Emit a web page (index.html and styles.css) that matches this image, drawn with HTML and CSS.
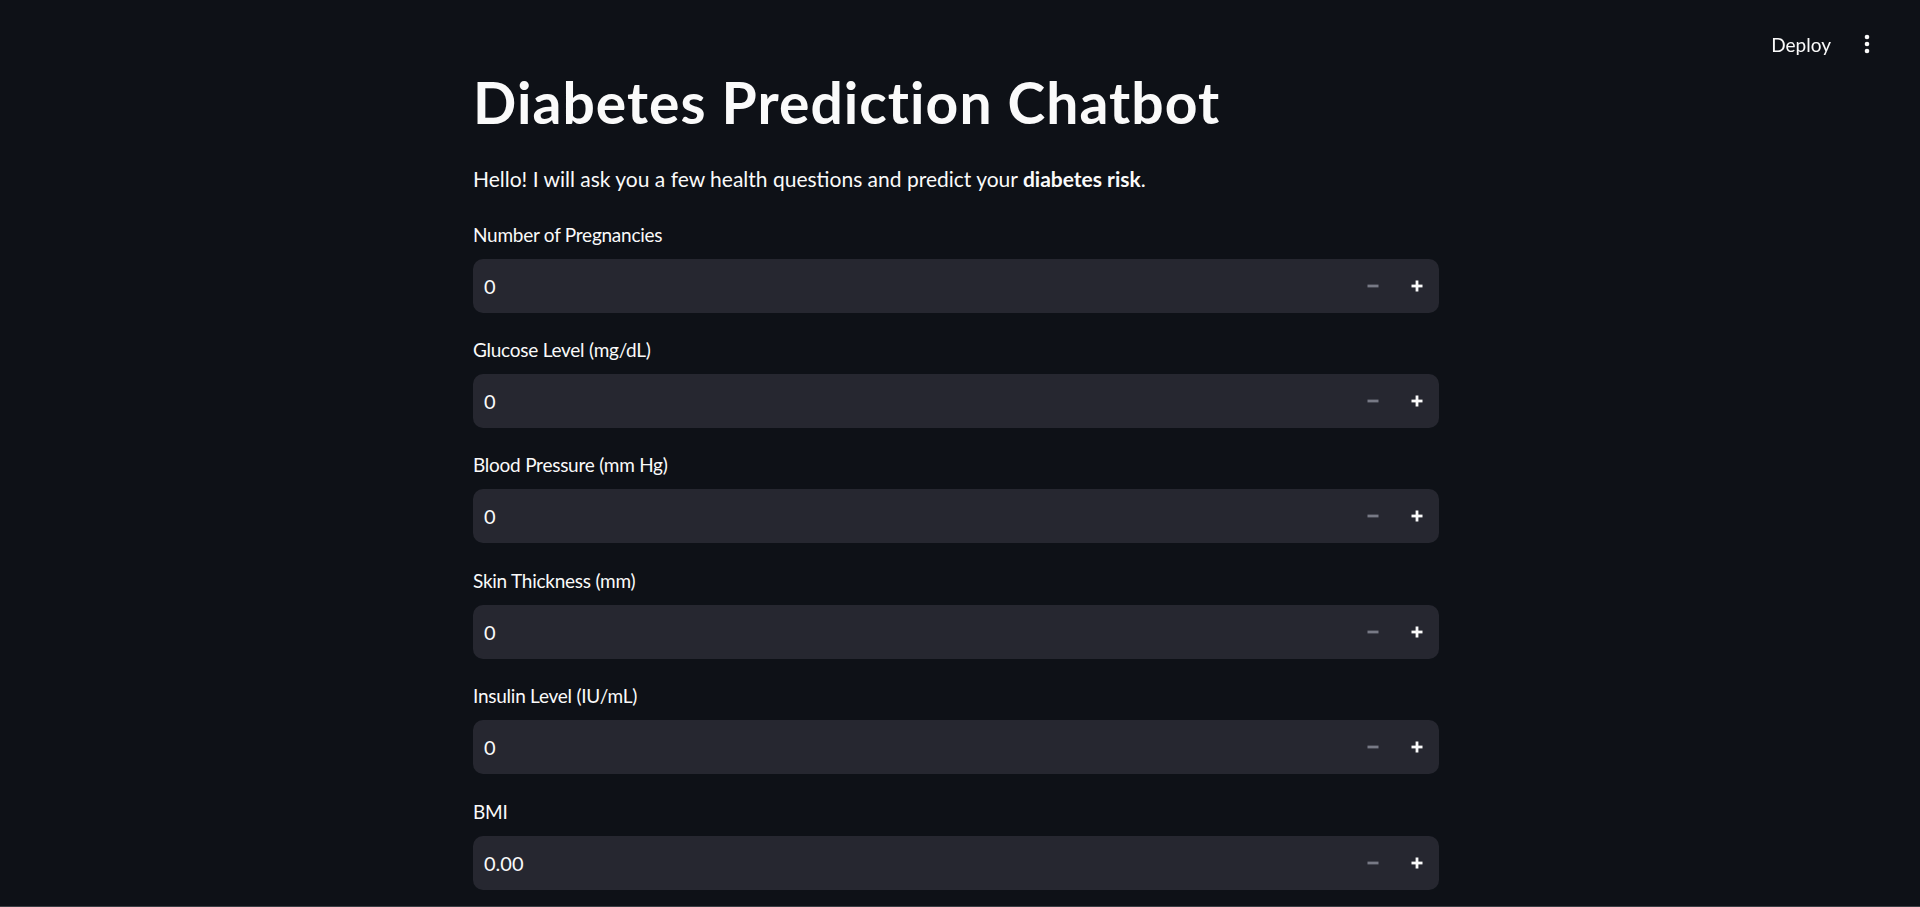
FILE: index.html
```html
<!DOCTYPE html>
<html lang="en">
<head>
<meta charset="utf-8">
<title>Diabetes Prediction Chatbot</title>
<link rel="stylesheet" href="styles.css">
</head>
<body>
<header class="top-bar">
  <span class="deploy">Deploy</span>
  <span class="kebab" aria-label="Main menu">
    <svg width="8" height="20" viewBox="0 0 8 20"><circle cx="4" cy="3" r="2.3" fill="#fafafa"/><circle cx="4" cy="10" r="2.3" fill="#fafafa"/><circle cx="4" cy="17" r="2.3" fill="#fafafa"/></svg>
  </span>
</header>
<main class="main">
  <div class="block">
    <h1 class="title">Diabetes Prediction Chatbot</h1>
    <p class="intro">Hello! I will ask you a few health questions and predict your <strong>diabetes risk</strong>.</p>

    <div class="field">
      <label class="label">Number of Pregnancies</label>
      <div class="num-input">
        <span class="value">0</span>
        <span class="step minus"><svg width="12" height="12" viewBox="0 0 12 12"><rect x="0.5" y="4.6" width="11" height="2.8" fill="currentColor"/></svg></span>
        <span class="step plus"><svg width="12" height="12" viewBox="0 0 12 12"><rect x="0.5" y="4.6" width="11" height="2.8" fill="currentColor"/><rect x="4.6" y="0.5" width="2.8" height="11" fill="currentColor"/></svg></span>
      </div>
    </div>

    <div class="field">
      <label class="label">Glucose Level (mg/dL)</label>
      <div class="num-input">
        <span class="value">0</span>
        <span class="step minus"><svg width="12" height="12" viewBox="0 0 12 12"><rect x="0.5" y="4.6" width="11" height="2.8" fill="currentColor"/></svg></span>
        <span class="step plus"><svg width="12" height="12" viewBox="0 0 12 12"><rect x="0.5" y="4.6" width="11" height="2.8" fill="currentColor"/><rect x="4.6" y="0.5" width="2.8" height="11" fill="currentColor"/></svg></span>
      </div>
    </div>

    <div class="field">
      <label class="label">Blood Pressure (mm Hg)</label>
      <div class="num-input">
        <span class="value">0</span>
        <span class="step minus"><svg width="12" height="12" viewBox="0 0 12 12"><rect x="0.5" y="4.6" width="11" height="2.8" fill="currentColor"/></svg></span>
        <span class="step plus"><svg width="12" height="12" viewBox="0 0 12 12"><rect x="0.5" y="4.6" width="11" height="2.8" fill="currentColor"/><rect x="4.6" y="0.5" width="2.8" height="11" fill="currentColor"/></svg></span>
      </div>
    </div>

    <div class="field">
      <label class="label">Skin Thickness (mm)</label>
      <div class="num-input">
        <span class="value">0</span>
        <span class="step minus"><svg width="12" height="12" viewBox="0 0 12 12"><rect x="0.5" y="4.6" width="11" height="2.8" fill="currentColor"/></svg></span>
        <span class="step plus"><svg width="12" height="12" viewBox="0 0 12 12"><rect x="0.5" y="4.6" width="11" height="2.8" fill="currentColor"/><rect x="4.6" y="0.5" width="2.8" height="11" fill="currentColor"/></svg></span>
      </div>
    </div>

    <div class="field">
      <label class="label">Insulin Level (IU/mL)</label>
      <div class="num-input">
        <span class="value">0</span>
        <span class="step minus"><svg width="12" height="12" viewBox="0 0 12 12"><rect x="0.5" y="4.6" width="11" height="2.8" fill="currentColor"/></svg></span>
        <span class="step plus"><svg width="12" height="12" viewBox="0 0 12 12"><rect x="0.5" y="4.6" width="11" height="2.8" fill="currentColor"/><rect x="4.6" y="0.5" width="2.8" height="11" fill="currentColor"/></svg></span>
      </div>
    </div>

    <div class="field">
      <label class="label">BMI</label>
      <div class="num-input">
        <span class="value">0.00</span>
        <span class="step minus"><svg width="12" height="12" viewBox="0 0 12 12"><rect x="0.5" y="4.6" width="11" height="2.8" fill="currentColor"/></svg></span>
        <span class="step plus"><svg width="12" height="12" viewBox="0 0 12 12"><rect x="0.5" y="4.6" width="11" height="2.8" fill="currentColor"/><rect x="4.6" y="0.5" width="2.8" height="11" fill="currentColor"/></svg></span>
      </div>
    </div>
  </div>
</main>
<div class="bottom-edge"></div>
</body>
</html>
```

FILE: styles.css
```css
html, body {
  margin: 0;
  padding: 0;
  background: #0e1117;
  color: #fafafa;
  font-family: Lato, "Noto Sans", sans-serif;
  overflow: hidden;
}

.top-bar {
  position: fixed;
  top: 0;
  right: 0;
  height: 88px;
  display: flex;
  align-items: center;
  padding-right: 49px;
  gap: 32px;
}

.deploy {
  font-size: 19px;
  color: #fafafa;
  line-height: 1;
}

.kebab {
  display: flex;
  align-items: center;
}

.kebab svg {
  display: block;
}

.main {
  display: flex;
  justify-content: center;
  padding-right: 8px;
  padding-top: 68px;
}

.block {
  width: 966px;
  display: flex;
  flex-direction: column;
}

.title {
  margin: 0;
  font-size: 57px;
  line-height: 1.2;
  font-weight: 700;
  letter-spacing: 1.05px;
}

.intro {
  margin: 25.2px 0 0;
  font-size: 21px;
  line-height: 1.6;
}

.intro strong {
  font-weight: 700;
}

.field {
  display: flex;
  flex-direction: column;
  margin-top: 22.4px;
}

.field + .field {
  margin-top: 20.4px;
}

.label {
  font-size: 19px;
  line-height: 33px;
  height: 33px;
  margin-bottom: 8px;
  letter-spacing: -0.25px;
}

.num-input {
  height: 54px;
  background: #262730;
  border-radius: 10px;
  display: flex;
  align-items: center;
}

.value {
  flex: 1;
  padding-left: 11px;
  font-size: 20px;
}

.step {
  width: 44px;
  height: 54px;
  display: flex;
  align-items: center;
  justify-content: center;
}

.step svg {
  display: block;
}

.minus {
  color: #777985;
}

.plus {
  color: #fafafa;
}

.bottom-edge {
  position: fixed;
  left: 0;
  right: 0;
  bottom: 0;
  height: 1px;
  background: #3c3f45;
}
```
